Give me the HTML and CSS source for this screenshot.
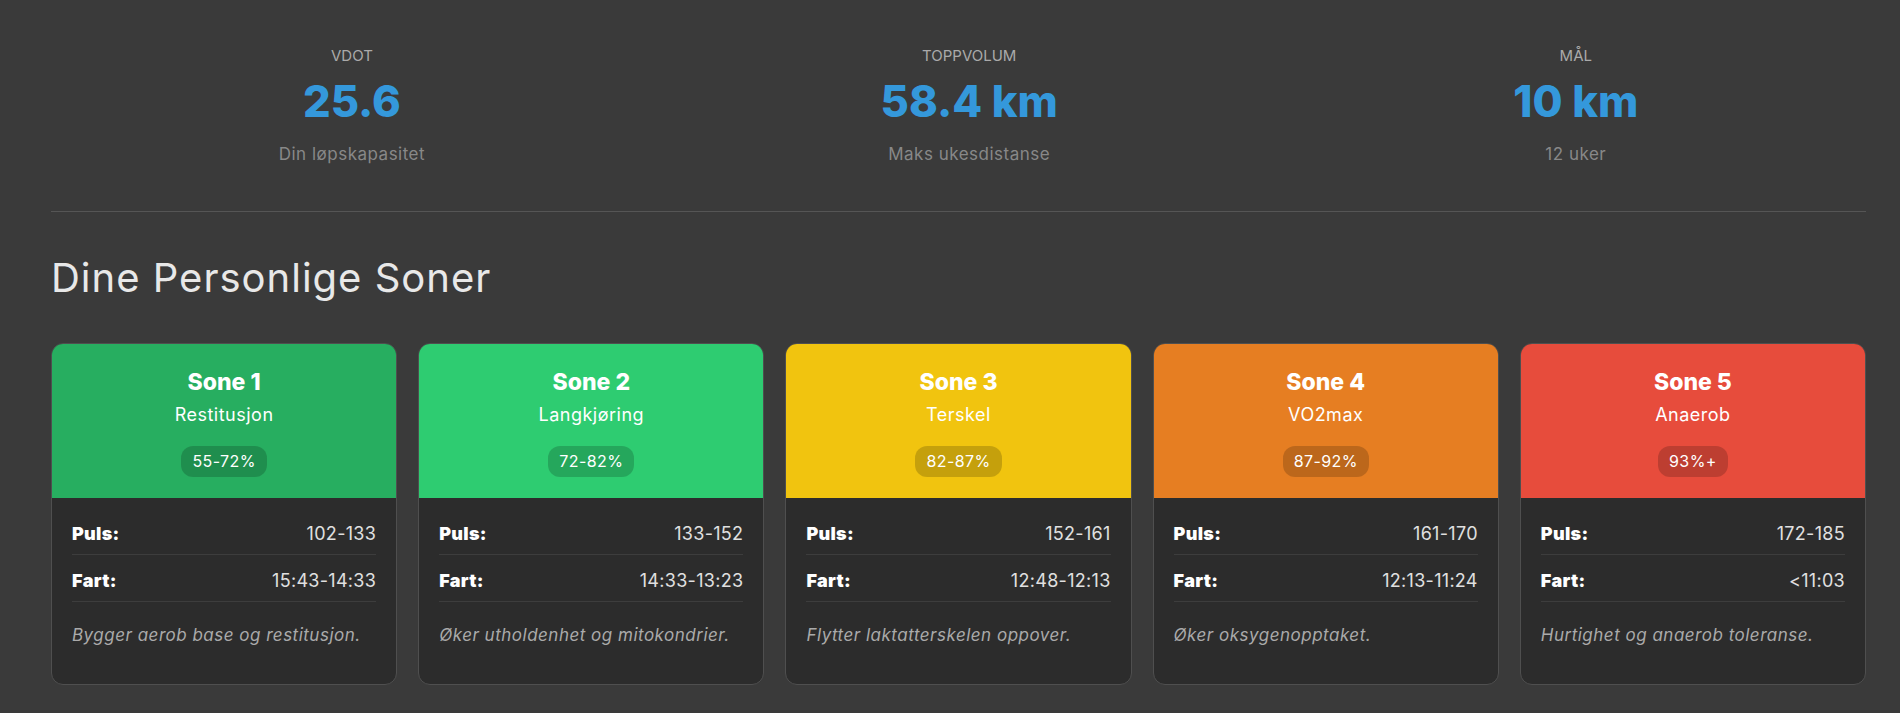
FILE: index.html
```html
<!DOCTYPE html>
<html lang="en">

<head>
    <meta charset="UTF-8">
    <title>Dine Personlige Soner</title>
    <link rel="stylesheet" href="styles.css">
</head>

<body>
    <div class="stats">
        <div class="stat">
            <div class="stat-label">VDOT</div>
            <div class="stat-value">25.6</div>
            <div class="stat-sub">Din løpskapasitet</div>
        </div>
        <div class="stat">
            <div class="stat-label">TOPPVOLUM</div>
            <div class="stat-value">58.4 km</div>
            <div class="stat-sub">Maks ukesdistanse</div>
        </div>
        <div class="stat">
            <div class="stat-label">MÅL</div>
            <div class="stat-value">10 km</div>
            <div class="stat-sub">12 uker</div>
        </div>
    </div>

    <h2 class="section-title">Dine Personlige Soner</h2>

    <div class="zones">
        <div class="zone">
            <div class="zone-head zone1">
                <h3>Sone 1</h3>
                <div class="zone-name">Restitusjon</div>
                <span class="zone-badge">55-72%</span>
            </div>
            <div class="zone-body">
                <div class="zone-row"><strong>Puls:</strong><span>102-133</span></div>
                <div class="zone-row"><strong>Fart:</strong><span>15:43-14:33</span></div>
                <p class="zone-desc">Bygger aerob base og restitusjon.</p>
            </div>
        </div>
        <div class="zone">
            <div class="zone-head zone2">
                <h3>Sone 2</h3>
                <div class="zone-name">Langkjøring</div>
                <span class="zone-badge">72-82%</span>
            </div>
            <div class="zone-body">
                <div class="zone-row"><strong>Puls:</strong><span>133-152</span></div>
                <div class="zone-row"><strong>Fart:</strong><span>14:33-13:23</span></div>
                <p class="zone-desc">Øker utholdenhet og mitokondrier.</p>
            </div>
        </div>
        <div class="zone">
            <div class="zone-head zone3">
                <h3>Sone 3</h3>
                <div class="zone-name">Terskel</div>
                <span class="zone-badge">82-87%</span>
            </div>
            <div class="zone-body">
                <div class="zone-row"><strong>Puls:</strong><span>152-161</span></div>
                <div class="zone-row"><strong>Fart:</strong><span>12:48-12:13</span></div>
                <p class="zone-desc">Flytter laktatterskelen oppover.</p>
            </div>
        </div>
        <div class="zone">
            <div class="zone-head zone4">
                <h3>Sone 4</h3>
                <div class="zone-name">VO2max</div>
                <span class="zone-badge">87-92%</span>
            </div>
            <div class="zone-body">
                <div class="zone-row"><strong>Puls:</strong><span>161-170</span></div>
                <div class="zone-row"><strong>Fart:</strong><span>12:13-11:24</span></div>
                <p class="zone-desc">Øker oksygenopptaket.</p>
            </div>
        </div>
        <div class="zone">
            <div class="zone-head zone5">
                <h3>Sone 5</h3>
                <div class="zone-name">Anaerob</div>
                <span class="zone-badge">93%+</span>
            </div>
            <div class="zone-body">
                <div class="zone-row"><strong>Puls:</strong><span>172-185</span></div>
                <div class="zone-row"><strong>Fart:</strong><span>&lt;11:03</span></div>
                <p class="zone-desc">Hurtighet og anaerob toleranse.</p>
            </div>
        </div>
    </div>
</body>
</html>
```

FILE: styles.css
```css
body {
    margin: 0;
    padding: 0 34px 0 51px;
    height: 713px;
    box-sizing: border-box;
    overflow: hidden;
    background-color: #3a3a3a;
    color: #e0e0e0;
    font-family: Inter, "Open Sans", sans-serif;
}

.stats {
    display: flex;
    justify-content: space-around;
    border-bottom: 1px solid #555;
    padding-top: 46px;
    height: 165px;
    text-align: center;
}

.stat-label {
    font-size: 15px;
    line-height: 20px;
    color: #aaa;
}

.stat-value {
    font-size: 43.5px;
    line-height: 56px;
    font-weight: 800;
    color: #3498db;
    margin-top: 7px;
}

.stat-sub {
    font-size: 17px;
    letter-spacing: 0.5px;
    line-height: 24px;
    color: #888;
    margin-top: 13px;
}

.section-title {
    margin: 38px 0 0;
    font-size: 40px;
    letter-spacing: 1px;
    line-height: 56px;
    font-weight: 400;
    color: #e8e8e8;
}

.zones {
    display: grid;
    grid-template-columns: repeat(5, 1fr);
    gap: 21px;
    margin-top: 37px;
}

.zone {
    height: 342px;
    box-sizing: border-box;
    background: #2c2c2c;
    border: 1px solid #4f4f4f;
    border-radius: 12px;
    overflow: hidden;
}

.zone-head {
    height: 154px;
    box-sizing: border-box;
    padding-top: 24px;
    text-align: center;
    color: white;
}

.zone-head h3 {
    margin: 0;
    font-size: 23px;
    line-height: 28px;
    font-weight: 800;
}

.zone-name {
    font-size: 18px;
    letter-spacing: 0.5px;
    line-height: 24px;
    margin-top: 7px;
    margin-bottom: 19px;
}

.zone-badge {
    display: inline-block;
    padding: 0 11px;
    font-size: 16px;
    letter-spacing: 0.4px;
    line-height: 31px;
    border-radius: 12px;
    background: rgba(0, 0, 0, 0.18);
}

.zone1 { background: #27ae60; }
.zone2 { background: #2ecc71; }
.zone3 { background: #f1c40f; }
.zone4 { background: #e67e22; }
.zone5 { background: #e74c3c; }

.zone-body {
    padding: 10px 20px 0;
}

.zone-row {
    display: flex;
    justify-content: space-between;
    align-items: center;
    height: 47px;
    box-sizing: border-box;
    padding-top: 4px;
    border-bottom: 1px solid #3d3d3d;
    font-size: 18px;
    letter-spacing: 0.3px;
    color: #e0e0e0;
}

.zone-row strong {
    font-weight: 900;
    color: white;
}

.zone-desc {
    margin: 20px 0 0;
    font-size: 17px;
    letter-spacing: 0.5px;
    line-height: 26px;
    font-style: italic;
    color: #aaa;
}
```
